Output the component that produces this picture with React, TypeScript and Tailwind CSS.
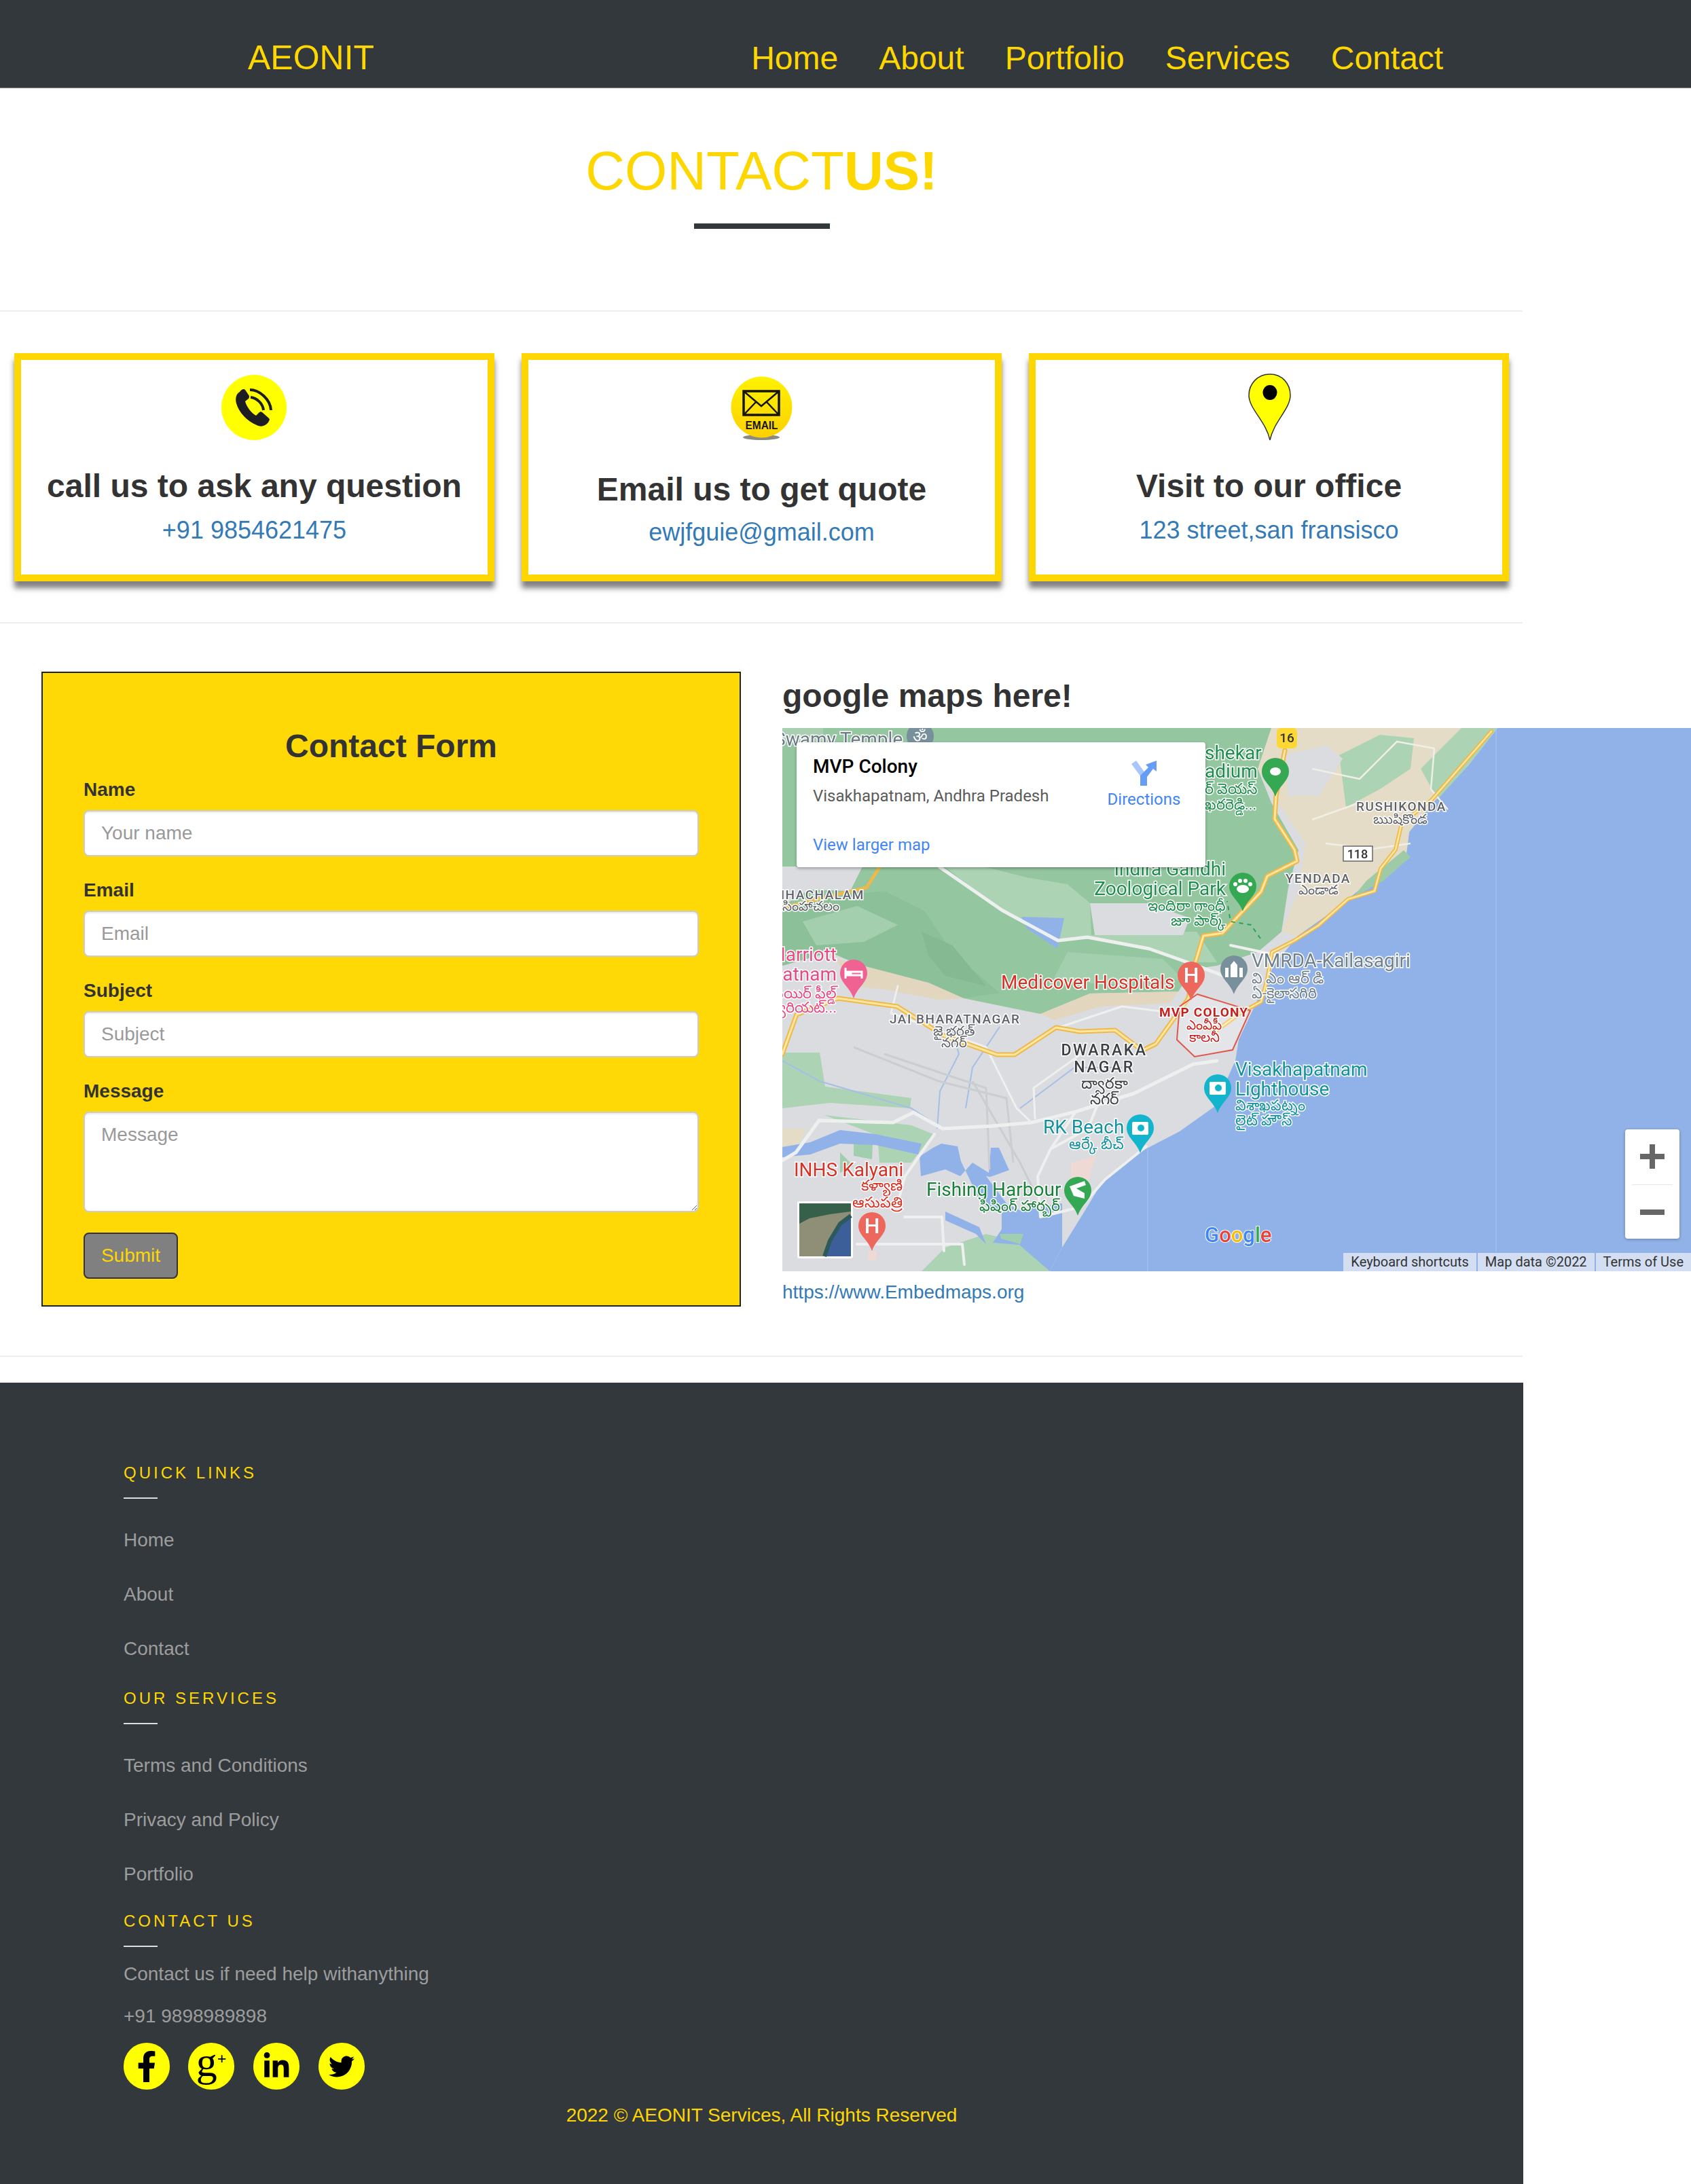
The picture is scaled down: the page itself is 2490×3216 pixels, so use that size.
import { ReactNode } from 'react';
import { FaFacebookF, FaLinkedinIn, FaTwitter } from 'react-icons/fa';

const navLinks = ['Home', 'About', 'Portfolio', 'Services', 'Contact'];

const PhoneIcon = () => (
  <svg viewBox="0 0 96 96" className="w-[96px] h-[96px] -ml-[1px]">
    <circle cx="48" cy="48" r="48" fill="#ffff00" />
    <path
      d="M27 25C22 28 20 34 22 42C26 56 38 68 52 74C58 77 64 76 69 70L71 66C71 65 70 64 69 63L60 55C58 54 57 54 55 56L51 60C44 56 37 47 35 39L40 35C41 34 41 32 41 31L35 22C33 20 30 21 27 25Z"
      fill="#1d1d22"
    />
    <path d="M42 22C56 22 72 36 73 52" fill="none" stroke="#1d1d22" strokeWidth="4" />
    <path d="M43 33C52 34 61 42 62 52" fill="none" stroke="#1d1d22" strokeWidth="4" />
  </svg>
);

const EmailIcon = () => (
  <svg viewBox="0 0 91 95" className="w-[91px] h-[95px]">
    <defs>
      <linearGradient id="mailFill" x1="0" y1="0" x2="0" y2="1">
        <stop offset="0" stopColor="#fff200" />
        <stop offset="1" stopColor="#fdd000" />
      </linearGradient>
    </defs>
    <ellipse cx="45" cy="90" rx="27" ry="4" fill="#8a8a80" />
    <circle cx="45.5" cy="45.5" r="45" fill="url(#mailFill)" />
    <rect x="19" y="22" width="52" height="35" fill="none" stroke="#15150c" strokeWidth="3.5" />
    <path d="M19 22L45 44L71 22M19 57L38 37M71 57L52 37" fill="none" stroke="#15150c" strokeWidth="2.5" />
    <text x="45.5" y="78" textAnchor="middle" fontSize="16" fontWeight="700" fill="#15150c" textLength="48" lengthAdjust="spacingAndGlyphs">
      EMAIL
    </text>
  </svg>
);

const PinIcon = () => (
  <svg viewBox="0 0 63 99" className="w-[63px] h-[99px] ml-[1px]">
    <path d="M32 1C14 1 1 15 1 32C1 52 26 70 32 98C38 70 62 52 62 32C62 15 50 1 32 1Z" fill="#ffff00" stroke="#333" strokeWidth="1.5" />
    <ellipse cx="32" cy="28" rx="10.5" ry="11" fill="#000" />
  </svg>
);

const cards = [
  { icon: <PhoneIcon />, wrap: 'pt-[22px] mb-[41px]', title: 'call us to ask any question', link: '+91 9854621475', linkTop: 'mt-[13px]' },
  { icon: <EmailIcon />, wrap: 'pt-[24px] mb-[45px]', title: 'Email us to get quote', link: 'ewjfguie@gmail.com', linkTop: 'mt-[11px]' },
  { icon: <PinIcon />, wrap: 'pt-[20px] mb-[40px]', title: 'Visit to our office', link: '123 street,san fransisco', linkTop: 'mt-[13px]' },
];

const Divider = () => <div className="h-[2px] w-[2242px] bg-[#eeeeee]" />;

const Field = ({ label, placeholder }: { label: string; placeholder: string }) => (
  <div className="mb-[30px]">
    <label className="block mb-[10px] text-[28px] leading-[40px] font-bold text-[#333]">{label}</label>
    <input
      placeholder={placeholder}
      className="block w-full h-[68px] px-[24px] bg-white border-2 border-[#cccccc] rounded-lg text-[28px] placeholder:text-[#999] shadow-[inset_0_2px_2px_rgba(0,0,0,0.075)]"
    />
  </div>
);

type LabelProps = {
  x: number;
  y: number;
  size?: number;
  fill: string;
  anchor?: 'start' | 'middle' | 'end';
  weight?: number;
  spacing?: number;
  children: ReactNode;
};

const Label = ({ x, y, size = 28, fill, anchor = 'start', weight = 400, spacing = 0, children }: LabelProps) => (
  <text
    x={x}
    y={y}
    fontSize={size}
    fill={fill}
    textAnchor={anchor}
    fontWeight={weight}
    letterSpacing={spacing}
    stroke="#fff"
    strokeWidth="3"
    paintOrder="stroke"
    fontFamily="Roboto, sans-serif"
  >
    {children}
  </text>
);

const Pin = ({ x, y, color, children }: { x: number; y: number; color: string; children?: ReactNode }) => (
  <g transform={`translate(${x} ${y})`}>
    <path d="M-20 0a20 20 0 1 1 40 0c0 14 -14 20 -20 37c-6 -17 -20 -23 -20 -37z" fill={color} />
    {children}
  </g>
);

const HGlyph = () => (
  <text x="0" y="11" textAnchor="middle" fontSize="32" fontWeight="500" fill="#fff" fontFamily="Roboto, sans-serif">
    H
  </text>
);

const CameraGlyph = () => (
  <g fill="#fff">
    <rect x="-12" y="-9" width="24" height="19" rx="2" />
    <circle cx="1" cy="0" r="5" fill="#12b5cb" />
  </g>
);

const MapDrawing = () => (
  <svg viewBox="0 0 1338 800" className="block w-[1338px] h-[800px] blur-[0.6px]">
    <rect width="1338" height="800" fill="#91b2e8" />
    {/* land */}
    <path
      d="M0 0H1053L1010 55L958 110L923 153L919 184L880 214L811 269L759 306L724 349L698 404L672 459L667 490L637 557L585 594L533 621L472 667L446 710L412 765L394 800H0Z"
      fill="#dadce0"
    />
    {/* tan north east */}
    <path d="M640 0H1053L1010 55L958 110L923 153L919 184L880 214L811 269L759 306L735 300L760 240L770 170L730 110L700 60Z" fill="#e4dcc6" />
    <path d="M820 40L880 10L930 15L925 60L880 90L830 117Z" fill="#acd4b4" />
    <path d="M740 40L800 25L825 45L790 100L745 100Z" fill="#dadce0" />
    <path d="M860 225L915 180L925 190L885 225L840 250Z" fill="#9fcaa8" />
    <path d="M940 60L1000 0H1053L1010 55L965 105Z" fill="#acd4b4" />
    {/* hills */}
    <path
      d="M0 0H720L700 60L720 110L760 180L745 235L735 300L700 330L640 350L605 355L583 388L453 391L380 421L267 398L215 375L128 355L70 330L0 350Z"
      fill="#94c6a0"
    />
    <path d="M0 262L60 250L150 240L210 270L250 330L320 390L267 398L215 375L128 355L70 330L0 350Z" fill="#8cc098" />
    <path d="M30 285L110 262L170 290L120 315L50 320Z" fill="#a3cfae" />
    <path d="M205 300L250 320L300 380L240 365L215 335Z" fill="#85b991" />
    <path d="M420 330L560 340L590 370L470 378L400 368Z" fill="#a3cfae" />
    <path d="M240 205L330 275L405 315L450 310L540 325L600 345L640 345L610 300L540 300L455 305L453 258L420 230L360 220L300 205Z" fill="#acd4b4" />
    <path d="M453 258H540L600 280L590 305L460 305Z" fill="#dadce0" />
    <path d="M0 204H70L120 200L100 240L40 238L0 262Z" fill="#dadce0" />
    <path d="M0 0H60V20H0Z" fill="#a8cfb0" />
    <path d="M80 340L215 375L267 398L230 400L150 385L100 380Z" fill="#e2d6bf" />
    <path d="M380 421L453 391L583 388L570 405L470 410L400 430Z" fill="#e2d6bf" />
    {/* lake */}
    <path d="M352 278L415 280L405 325L360 295Z" fill="#91b2e8" />
    {/* south green */}
    <path d="M0 478L55 478L63 528L190 545L188 560L70 552L0 560Z" fill="#acd4b4" />
    <path d="M62 570L190 585L222 598L190 640L143 640L140 600Z" fill="#acd4b4" />
    <path d="M105 610L133 612L132 635L105 630ZM85 625L105 645L85 655Z" fill="#a0ceae" />
    <path d="M205 800L240 765L300 745L385 765L395 800Z" fill="#acd4b4" />
    <path d="M0 590L35 590L20 625H0Z" fill="#e4dcc6" />
    <path d="M425 640L462 630L450 670L425 665Z" fill="#efd9d5" />
    {/* river and harbour */}
    <path d="M0 617L41 610L85 592L137 598L205 612L200 628L137 614L85 612L41 628L0 632Z" fill="#91b2e8" />
    <path d="M202 631L222 618L234 612L258 616L263 638L276 665L293 701L323 715L323 738L310 758L349 761L394 800L412 765V700L349 710L330 700L300 660L306 661L334 651L319 618L307 618L304 655L280 640L262 660L240 650L204 660Z" fill="#91b2e8" />
    <path d="M240 712L290 735L300 760L285 745L240 725Z" fill="#91b2e8" />
    <path d="M320 745H355L350 760L322 752Z" fill="#a0ceae" />
    <path d="M0 490L55 520L190 560L236 590M320 440L280 500L270 560M250 445L260 480L232 535L228 590M500 500L430 500L390 530L350 560" fill="none" stroke="#a5bfe6" strokeWidth="2" />
    {/* rail */}
    <path d="M105 470L230 520L330 545L340 640M150 480L300 530L305 650M280 520L350 640L370 680" fill="none" stroke="#cbcdd0" strokeWidth="3" />
    {/* white roads */}
    <g fill="none" stroke="#eef0f0" strokeLinecap="round" strokeLinejoin="round">
      <path d="M232 205L323 268L406 313L449 308L540 325L605 348L650 365" strokeWidth="5" />
      <path d="M-2 638L20 625L54 578L163 581L193 566L236 590L310 586L367 581L432 565L518 538L605 495L640 490" strokeWidth="5" />
      <path d="M224 598L180 661L170 700M180 720L235 720L238 770M110 760H265L268 790" strokeWidth="4" />
      <path d="M536 616L475 665L440 705L380 720L376 660L395 620L432 565M395 620L450 590L470 540" strokeWidth="4" />
      <path d="M300 470L345 560L367 581M440 480L370 530L372 575" strokeWidth="3" />
      <path d="M300 470L160 420L170 380M410 440L500 410L580 420" strokeWidth="3" />
      <path d="M660 320L730 335" strokeWidth="4" />
    </g>
    <path d="M780 60L850 75L905 20L960 30L955 90L980 120M800 170L870 178L925 170M780 135L850 110" fill="none" stroke="#f0eee6" strokeWidth="2.5" strokeLinejoin="round" />
    {/* highways */}
    <g fill="none" strokeLinecap="round" strokeLinejoin="round">
      <path d="M740 33L727 100L725 134L754 179L758 196L714 218L705 241L674 274L648 302L620 306L607 349L598 398L550 465L530 475L490 445L438 447L403 441L342 481L316 481L238 453L169 410L82 398L21 422L0 480" stroke="#efb94a" strokeWidth="7" />
      <path d="M740 33L727 100L725 134L754 179L758 196L714 218L705 241L674 274L648 302L620 306L607 349L598 398L550 465L530 475L490 445L438 447L403 441L342 481L316 481L238 453L169 410L82 398L21 422L0 480" stroke="#fde7a0" strokeWidth="3" />
      <path d="M1044 5L956 106L912 140L903 179L881 207L872 240L833 252L789 291L754 313L721 330L714 370L705 403L674 420L640 445L610 440" stroke="#efb94a" strokeWidth="6" />
      <path d="M1044 5L956 106L912 140L903 179L881 207L872 240L833 252L789 291L754 313L721 330L714 370L705 403L674 420L640 445L610 440" stroke="#fde7a0" strokeWidth="2.5" />
      <path d="M143 205L124 235L60 250L0 265" stroke="#efb94a" strokeWidth="5" />
    </g>
    <path d="M704 310L690 290L660 285L655 255" fill="none" stroke="#2f9e58" strokeWidth="2" strokeDasharray="6 6" />
    <path d="M611 392L689 416L663 474L607 484L581 459L585 410Z" fill="#ffffff" fillOpacity="0.25" stroke="#e2574c" strokeWidth="2" />
    <path d="M1051 0V800" stroke="#a9c3ee" strokeWidth="1" />
    <path d="M538 620V800" stroke="#a9c3ee" strokeWidth="1" />

    {/* shields */}
    <rect x="728" y="0" width="30" height="30" rx="6" fill="#fdd835" />
    <text x="743" y="21" textAnchor="middle" fontSize="19" fontWeight="500" fill="#333" fontFamily="Roboto, sans-serif">16</text>
    <rect x="826" y="174" width="43" height="22" fill="#fff" stroke="#666" strokeWidth="1.5" />
    <text x="847" y="192" textAnchor="middle" fontSize="18" fontWeight="500" fill="#333" fontFamily="Roboto, sans-serif">118</text>

    {/* labels */}
    <Label x={-12} y={26} fill="#6b7a85">Swamy Temple</Label>
    <Label x={622} y={46} fill="#1e8e4e">shekar</Label>
    <Label x={622} y={73} fill="#1e8e4e">adium</Label>
    <Label x={622} y={97} size={22} fill="#1e8e4e">ర్ వెయస్</Label>
    <Label x={622} y={120} size={22} fill="#1e8e4e">ఖరరెడ్డి...</Label>
    <Label x={845} y={122} size={19} weight={500} spacing={1.5} fill="#5f6368">RUSHIKONDA</Label>
    <Label x={910} y={141} size={20} anchor="middle" fill="#5f6368">ఋషికొండ</Label>
    <Label x={741} y={228} size={19} weight={500} spacing={1.5} fill="#5f6368">YENDADA</Label>
    <Label x={789} y={245} size={20} anchor="middle" fill="#5f6368">ఎండాడ</Label>
    <Label x={121} y={252} size={19} anchor="end" weight={500} spacing={1.5} fill="#5f6368">SIMHACHALAM</Label>
    <Label x={0} y={269} size={20} fill="#5f6368">సింహాచలం</Label>
    <Label x={653} y={217} anchor="end" fill="#1e8e4e">Indira Gandhi</Label>
    <Label x={653} y={246} anchor="end" fill="#1e8e4e">Zoological Park</Label>
    <Label x={653} y={269} size={22} anchor="end" fill="#1e8e4e">ఇందిరా గాంధీ</Label>
    <Label x={653} y={291} size={22} anchor="end" fill="#1e8e4e">జూ పార్క్</Label>
    <Label x={80} y={343} anchor="end" fill="#e84a82">Marriott</Label>
    <Label x={80} y={372} anchor="end" fill="#e84a82">Visakhapatnam</Label>
    <Label x={80} y={398} size={22} anchor="end" fill="#e84a82">ఫెయిర్ ఫీల్డ్</Label>
    <Label x={80} y={419} size={22} anchor="end" fill="#e84a82">మ్యారియట్...</Label>
    <Label x={322} y={384} fill="#d93025">Medicover Hospitals</Label>
    <Label x={691} y={352} fill="#70808d">VMRDA-Kailasagiri</Label>
    <Label x={691} y={376} size={22} fill="#70808d">వి ఎం ఆర్ డి</Label>
    <Label x={691} y={398} size={22} fill="#70808d">ఏ-కైలాసగిరి</Label>
    <Label x={158} y={435} size={19} weight={500} spacing={1.5} fill="#5f6368">JAI BHARATNAGAR</Label>
    <Label x={253} y={453} size={20} anchor="middle" fill="#5f6368">జై భరత్</Label>
    <Label x={253} y={470} size={20} anchor="middle" fill="#5f6368">నగర్</Label>
    <Label x={555} y={425} size={19} weight={700} spacing={1.2} fill="#c5221f">MVP COLONY</Label>
    <Label x={621} y={444} size={20} anchor="middle" fill="#c5221f">ఎంవీపీ</Label>
    <Label x={621} y={462} size={20} anchor="middle" fill="#c5221f">కాలనీ</Label>
    <Label x={474} y={482} size={23} anchor="middle" weight={500} spacing={2.5} fill="#3c4043">DWARAKA</Label>
    <Label x={474} y={507} size={23} anchor="middle" weight={500} spacing={2.5} fill="#3c4043">NAGAR</Label>
    <Label x={474} y={531} size={23} anchor="middle" fill="#3c4043">ద్వారకా</Label>
    <Label x={474} y={554} size={23} anchor="middle" fill="#3c4043">నగర్</Label>
    <Label x={667} y={512} fill="#12929f">Visakhapatnam</Label>
    <Label x={667} y={541} fill="#12929f">Lighthouse</Label>
    <Label x={667} y={563} size={22} fill="#12929f">విశాఖపట్నం</Label>
    <Label x={667} y={585} size={22} fill="#12929f">లైట్ హౌస్</Label>
    <Label x={384} y={597} fill="#12929f">RK Beach</Label>
    <Label x={503} y={620} size={22} anchor="end" fill="#12929f">ఆర్కే బీచ్</Label>
    <Label x={17} y={660} fill="#d93025">INHS Kalyani</Label>
    <Label x={177} y={681} size={22} anchor="end" fill="#d93025">కళ్యాణి</Label>
    <Label x={177} y={706} size={22} anchor="end" fill="#d93025">ఆసుపత్రి</Label>
    <Label x={212} y={689} fill="#188038">Fishing Harbour</Label>
    <Label x={409} y={711} size={22} anchor="end" fill="#188038">ఫిషింగ్ హార్బర్</Label>

    {/* pins */}
    <Pin x={203} y={12} color="#78909c">
      <text x="0" y="9" textAnchor="middle" fontSize="24" fill="#fff" fontFamily="'DejaVu Sans', sans-serif">ॐ</text>
    </Pin>
    <Pin x={726} y={64} color="#34a853">
      <ellipse cx="0" cy="0" rx="8" ry="6" fill="#fff" />
    </Pin>
    <Pin x={678} y={233} color="#34a853">
      <g fill="#fff">
        <ellipse cx="0" cy="4" rx="9" ry="6" />
        <circle cx="-11" cy="-3" r="3" />
        <circle cx="-4" cy="-8" r="3" />
        <circle cx="4" cy="-8" r="3" />
        <circle cx="11" cy="-3" r="3" />
      </g>
    </Pin>
    <Pin x={105} y={361} color="#f06292">
      <path d="M-12 -8V8M-12 3H12V8M12 3V-2H-4V3M-9 -2H-5V1H-9Z" fill="none" stroke="#fff" strokeWidth="3" />
    </Pin>
    <Pin x={602} y={364} color="#ee675c"><HGlyph /></Pin>
    <Pin x={665} y={355} color="#78909c">
      <path d="M-13 12V-2H-8V12ZM-5 12V-6L0 -12L5 -6V12ZM8 12V-2H13V12Z" fill="#fff" />
    </Pin>
    <Pin x={641} y={530} color="#12b5cb"><CameraGlyph /></Pin>
    <Pin x={527} y={589} color="#12b5cb"><CameraGlyph /></Pin>
    <Pin x={132} y={733} color="#ee675c"><HGlyph /></Pin>
    <rect x="126" y="770" width="13" height="14" fill="#efd9d5" />
    <Pin x={435} y={681} color="#34a853">
      <path d="M-12 -6L10 -14L12 -8L-2 -3L10 4V12L-6 8Z" fill="#fff" />
    </Pin>

    {/* google mark */}
    <text x="622" y="757" fontSize="31" fontWeight="500" stroke="#fff" strokeWidth="2" paintOrder="stroke" fontFamily="Roboto, sans-serif">
      <tspan fill="#4285f4">G</tspan>
      <tspan fill="#ea4335">o</tspan>
      <tspan fill="#fbbc05">o</tspan>
      <tspan fill="#4285f4">g</tspan>
      <tspan fill="#34a853">l</tspan>
      <tspan fill="#ea4335">e</tspan>
    </text>

    {/* satellite thumbnail */}
    <g>
      <rect x="22" y="697" width="82" height="84" rx="3" fill="#fff" />
      <rect x="25" y="700" width="76" height="78" fill="#8f8f78" />
      <path d="M25 700H101V712L70 716L40 722L25 730Z" fill="#37604a" />
      <path d="M101 718V778H62L70 755L85 730Z" fill="#3c5f9a" />
      <path d="M62 778L70 755L85 730L101 718" fill="none" stroke="#2c5a5a" strokeWidth="6" />
    </g>
  </svg>
);

const FooterHeading = ({ children }: { children: ReactNode }) => (
  <>
    <h4 className="text-[24px] leading-[26px] tracking-[4px] text-[#ffd700]">{children}</h4>
    <div className="w-[50px] h-[2px] bg-[#dddddd] mt-[23px]" />
  </>
);

const FooterLinks = ({ title, links, bottom }: { title: string; links: string[]; bottom: string }) => (
  <div className={bottom}>
    <FooterHeading>{title}</FooterHeading>
    <ul className="mt-[41px]">
      {links.map((link) => (
        <li key={link} className="mb-[40px] text-[28px] leading-[40px] text-[#9d9d9d]">
          {link}
        </li>
      ))}
    </ul>
  </div>
);

export default function App() {
  return (
    <div className="w-[2490px] bg-white text-[#333] font-['Liberation_Sans',sans-serif]">
      <header className="h-[130px] bg-[#33383c] border-b border-[#888] pt-[60px] pl-[365px] flex items-baseline text-[#ffd700]">
        <div className="text-[50px] leading-[50px]">AEONIT</div>
        <nav className="ml-[555px] flex gap-[60px] text-[48px] leading-[48px]">
          {navLinks.map((item) => (
            <a key={item}>{item}</a>
          ))}
        </nav>
      </header>

      <main className="w-[2243px]">
        <div className="pt-[78px] flex flex-col items-center">
          <h1 className="text-[80px] leading-[88px] text-[#ffd700]">
            CONTACT<span className="font-bold">US!</span>
          </h1>
          <div className="w-[200px] h-[8px] mt-[33px] bg-[#33383c]" />
        </div>
        <div className="mt-[120px]">
          <Divider />
        </div>

        <section className="px-[21px] pt-[61px] pb-[60px] grid grid-cols-3 gap-[40px]">
          {cards.map((card) => (
            <div key={card.title} className="h-[336px] border-[10px] border-[#ffd700] bg-white flex flex-col items-center shadow-[0_10px_8px_rgba(0,0,0,0.5)]">
              <div className={card.wrap}>{card.icon}</div>
              <h3 className="text-[48px] leading-[53px] font-bold text-[#333]">{card.title}</h3>
              <a className={`text-[36px] leading-[51px] text-[#337ab7] ${card.linkTop}`}>{card.link}</a>
            </div>
          ))}
        </section>
        <Divider />

        <section className="pt-[71px] pb-[72px] pl-[61px] flex items-start">
          <form className="w-[1030px] shrink-0 border-2 border-[#222] bg-[#ffd905] px-[60px] pt-[81px] pb-[39px]">
            <h3 className="text-center text-[48px] leading-[53px] font-bold text-[#333] mb-[18px]">Contact Form</h3>
            <Field label="Name" placeholder="Your name" />
            <Field label="Email" placeholder="Email" />
            <Field label="Subject" placeholder="Subject" />
            <div className="mb-[30px]">
              <label className="block mb-[10px] text-[28px] leading-[40px] font-bold text-[#333]">Message</label>
              <textarea
                placeholder="Message"
                className="block w-full h-[148px] px-[24px] py-[12px] bg-white border-2 border-[#cccccc] rounded-lg text-[28px] leading-[40px] placeholder:text-[#999] shadow-[inset_0_2px_2px_rgba(0,0,0,0.075)]"
              />
            </div>
            <button type="button" className="w-[139px] h-[68px] bg-[#808080] border-2 border-[#333] rounded-lg text-[28px] text-[#ffd700]">
              Submit
            </button>
          </form>

          <div className="ml-[61px] w-[1338px] shrink-0">
            <h2 className="text-[48px] leading-[53px] font-bold text-[#333] mt-[9px] mb-[21px]">google maps here!</h2>
            <div className="relative w-[1338px] h-[800px] overflow-hidden">
              <MapDrawing />
              <div className="absolute left-[21px] top-[21px] w-[602px] h-[184px] bg-white rounded-sm shadow-[0_2px_4px_rgba(0,0,0,0.3)] font-['Roboto',sans-serif]">
                <div className="absolute left-[24px] top-[18px] text-[28px] leading-[36px] font-medium text-black">MVP Colony</div>
                <div className="absolute left-[24px] top-[62px] text-[24px] leading-[34px] text-[#5b5b5b]">Visakhapatnam, Andhra Pradesh</div>
                <div className="absolute left-[24px] top-[134px] text-[24px] leading-[34px] text-[#4285f4]">View larger map</div>
                <div className="absolute left-[458px] top-[27px] w-[107px] flex flex-col items-center">
                  <svg viewBox="0 0 37 37" className="w-[37px] h-[37px]">
                    <path d="M0 5L7 0L20 18L14 24Z" fill="#a9c6fb" />
                    <path d="M13 37V22L25 10L21 6L37 0V16L32 12L23 24V37Z" fill="#669df6" />
                  </svg>
                  <div className="text-[24px] leading-[34px] mt-[3px] text-[#4285f4]">Directions</div>
                </div>
              </div>
              <div className="absolute right-[17px] bottom-[48px] w-[80px] h-[161px] bg-white rounded-sm shadow-[0_1px_4px_rgba(0,0,0,0.3)] flex flex-col items-center pt-[22px]">
                <svg viewBox="0 0 36 36" className="w-[36px] h-[36px]">
                  <path d="M14 0H22V14H36V22H22V36H14V22H0V14H14Z" fill="#666" />
                </svg>
                <div className="w-[60px] h-[1px] mt-[23px] bg-[#e6e6e6]" />
                <div className="w-[36px] h-[8px] mt-[36px] bg-[#666]" />
              </div>
              <div className="absolute right-0 bottom-0 flex gap-[2px] text-[20px] leading-[27px] text-[#333] font-['Roboto',sans-serif]">
                <span className="px-[11px] bg-[#d4def2]">Keyboard shortcuts</span>
                <span className="px-[11px] bg-[#d4def2]">Map data ©2022</span>
                <span className="px-[11px] bg-[#d4def2]">Terms of Use</span>
              </div>
            </div>
            <a className="block mt-[11px] text-[28px] leading-[40px] text-[#337ab7]">https://www.Embedmaps.org</a>
          </div>
        </section>
        <Divider />

        <footer className="mt-[38px] bg-[#33383c] pt-[120px] pb-[81px] pl-[182px]">
          <FooterLinks title="QUICK LINKS" links={['Home', 'About', 'Contact']} bottom="mb-0" />
          <FooterLinks title="OUR SERVICES" links={['Terms and Conditions', 'Privacy and Policy', 'Portfolio']} bottom="-mb-[4px]" />
          <FooterHeading>CONTACT US</FooterHeading>
          <p className="mt-[20px] mb-[22px] text-[28px] leading-[40px] text-[#9d9d9d]">Contact us if need help withanything</p>
          <p className="mb-[19px] text-[28px] leading-[40px] text-[#9d9d9d]">+91 9898989898</p>
          <div className="flex gap-[28px] text-black">
            <a className="w-[68px] h-[69px] rounded-full bg-[#ffff00] flex items-center justify-center">
              <FaFacebookF className="w-[40px] h-[46px]" />
            </a>
            <a className="w-[68px] h-[69px] -ml-[1px] rounded-full bg-[#ffff00] flex items-center justify-center font-['Liberation_Serif',serif]">
              <span className="text-[62px] leading-[62px] -mt-[14px]">g</span>
              <span className="text-[24px] leading-[24px] font-bold -mt-[24px]">+</span>
            </a>
            <a className="w-[68px] h-[69px] rounded-full bg-[#ffff00] flex items-center justify-center">
              <FaLinkedinIn className="w-[42px] h-[42px]" />
            </a>
            <a className="w-[68px] h-[69px] rounded-full bg-[#ffff00] flex items-center justify-center">
              <FaTwitter className="w-[38px] h-[38px]" />
            </a>
          </div>
          <p className="-ml-[182px] mt-[18px] text-center text-[28px] leading-[40px] text-[#ffd700]">
            2022 © AEONIT Services, All Rights Reserved
          </p>
        </footer>
      </main>
    </div>
  );
}
